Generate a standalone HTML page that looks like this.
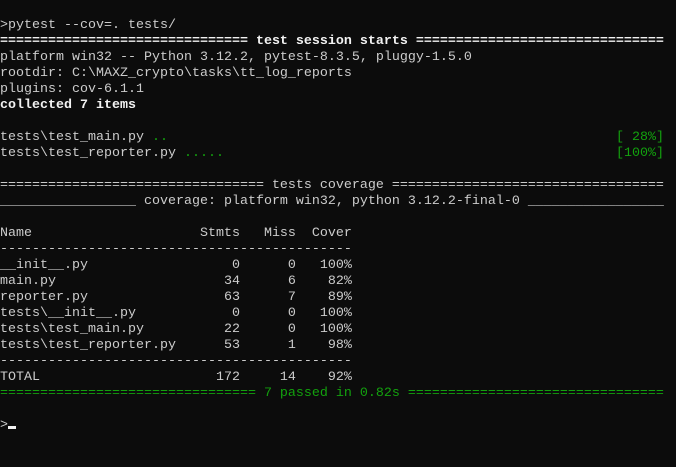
<!DOCTYPE html>
<html><head><meta charset="utf-8"><style>
html,body{margin:0;padding:0;background:#0c0c0c;width:676px;height:467px;overflow:hidden}
pre{margin:0;padding:18px 0 0 0;font-family:"Liberation Mono",monospace;font-size:13.333px;line-height:16px;color:#cccccc;white-space:pre}
.g{color:#13a10e}
.b{font-weight:bold;color:#f2f2f2}
.r{float:right;margin-right:12px}
.c{display:inline-block;width:8px;height:3px;background:#f2f2f2;vertical-align:-1px}
</style></head><body><pre>
&gt;pytest --cov=. tests/
<span class="b">=============================== test session starts ===============================</span>
platform win32 -- Python 3.12.2, pytest-8.3.5, pluggy-1.5.0
rootdir: C:\MAXZ_crypto\tasks\tt_log_reports
plugins: cov-6.1.1
<span class="b">collected 7 items</span>

tests\test_main.py <span class="g">..</span><span class="g r">[ 28%]</span>
tests\test_reporter.py <span class="g">.....</span><span class="g r">[100%]</span>

================================= tests coverage ==================================
_________________ coverage: platform win32, python 3.12.2-final-0 _________________

Name                     Stmts   Miss  Cover
--------------------------------------------
__init__.py                  0      0   100%
main.py                     34      6    82%
reporter.py                 63      7    89%
tests\__init__.py            0      0   100%
tests\test_main.py          22      0   100%
tests\test_reporter.py      53      1    98%
--------------------------------------------
TOTAL                      172     14    92%
<span class="g">================================ 7 passed in 0.82s ================================</span>

&gt;<span class="c"></span>
</pre></body></html>
